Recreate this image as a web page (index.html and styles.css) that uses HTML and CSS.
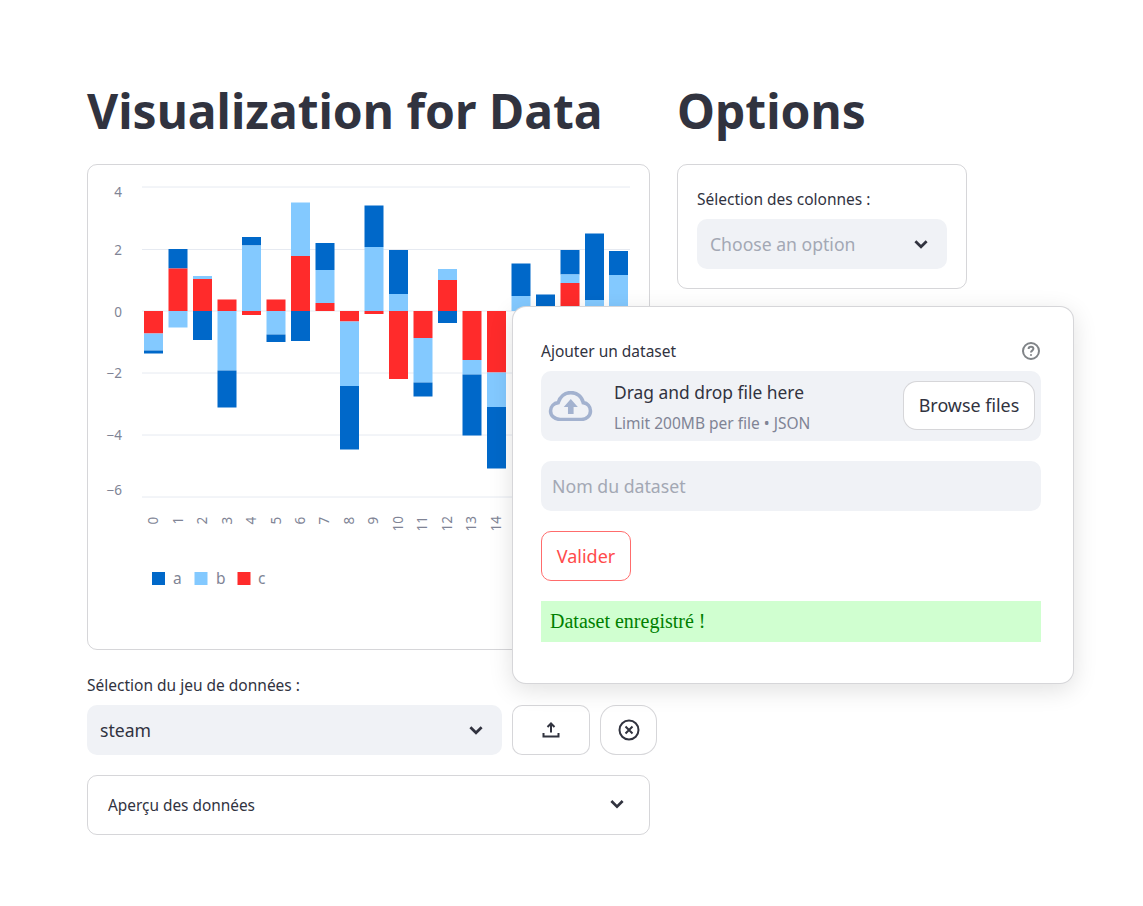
FILE: index.html
```html
<!DOCTYPE html>
<html lang="en">
<head>
    <meta charset="UTF-8">
    <title>Visualization for Data</title>
    <link rel="stylesheet" href="styles.css">
</head>
<body>
    <div class="page">
        <div class="main-col">
            <h1>Visualization for Data</h1>
            <div class="chart-card">
                <svg class="chart" width="561" height="484" viewBox="88 165 561 484">
                    <g class="grid">
                        <line x1="142" x2="630" y1="187" y2="187"/>
                        <line x1="142" x2="630" y1="249.5" y2="249.5"/>
                        <line x1="142" x2="630" y1="311" y2="311"/>
                        <line x1="142" x2="630" y1="373" y2="373"/>
                        <line x1="142" x2="630" y1="435" y2="435"/>
                        <line x1="142" x2="630" y1="497" y2="497"/>
                    </g>
                    <g class="axis-y">
                        <text x="122" y="197">4</text>
                        <text x="122" y="255">2</text>
                        <text x="122" y="316.500">0</text>
                        <text x="122" y="378">−2</text>
                        <text x="122" y="440">−4</text>
                        <text x="122" y="495">−6</text>
                    </g>
                    <g class="axis-x">
                        <text transform="translate(158 524.500) rotate(-90)">0</text>
                        <text transform="translate(183 524.500) rotate(-90)">1</text>
                        <text transform="translate(207 524.500) rotate(-90)">2</text>
                        <text transform="translate(232 524.500) rotate(-90)">3</text>
                        <text transform="translate(256 524.500) rotate(-90)">4</text>
                        <text transform="translate(281 524.500) rotate(-90)">5</text>
                        <text transform="translate(305 524.500) rotate(-90)">6</text>
                        <text transform="translate(329 524.500) rotate(-90)">7</text>
                        <text transform="translate(354 524.500) rotate(-90)">8</text>
                        <text transform="translate(378 524.500) rotate(-90)">9</text>
                        <text transform="translate(403 531.500) rotate(-90)">10</text>
                        <text transform="translate(427 531.500) rotate(-90)">11</text>
                        <text transform="translate(452 531.500) rotate(-90)">12</text>
                        <text transform="translate(476 531.500) rotate(-90)">13</text>
                        <text transform="translate(501 531.500) rotate(-90)">14</text>
                    </g>
                    <g class="bars">
                        <rect class="c" x="144" y="311" width="19" height="22.5"/>
                        <rect class="b" x="144" y="333.5" width="19" height="17"/>
                        <rect class="a" x="144" y="350.5" width="19" height="3"/>

                        <rect class="a" x="168.500" y="249" width="19" height="19.500"/>
                        <rect class="c" x="168.500" y="268.500" width="19" height="42.500"/>
                        <rect class="b" x="168.500" y="311" width="19" height="16.500"/>

                        <rect class="b" x="193" y="276" width="19" height="3"/>
                        <rect class="c" x="193" y="279" width="19" height="32"/>
                        <rect class="a" x="193" y="311" width="19" height="29"/>

                        <rect class="c" x="217.500" y="299.500" width="19" height="11.500"/>
                        <rect class="b" x="217.500" y="311" width="19" height="59.500"/>
                        <rect class="a" x="217.500" y="370.500" width="19" height="37"/>

                        <rect class="a" x="242" y="237" width="19" height="8.500"/>
                        <rect class="b" x="242" y="245.500" width="19" height="65.500"/>
                        <rect class="c" x="242" y="311" width="19" height="4"/>

                        <rect class="c" x="266.500" y="299.500" width="19" height="11.500"/>
                        <rect class="b" x="266.500" y="311" width="19" height="23.500"/>
                        <rect class="a" x="266.500" y="334.500" width="19" height="7.500"/>

                        <rect class="b" x="291" y="202.500" width="19" height="53.500"/>
                        <rect class="c" x="291" y="256" width="19" height="55"/>
                        <rect class="a" x="291" y="311" width="19" height="30"/>

                        <rect class="a" x="315.500" y="243" width="19" height="27"/>
                        <rect class="b" x="315.500" y="270" width="19" height="33"/>
                        <rect class="c" x="315.500" y="303" width="19" height="8"/>

                        <rect class="c" x="340" y="311" width="19" height="10.500"/>
                        <rect class="b" x="340" y="321.500" width="19" height="64.500"/>
                        <rect class="a" x="340" y="386" width="19" height="63.500"/>

                        <rect class="a" x="364.500" y="205.500" width="19" height="41.500"/>
                        <rect class="b" x="364.500" y="247" width="19" height="64"/>
                        <rect class="c" x="364.500" y="311" width="19" height="3"/>

                        <rect class="a" x="389" y="250" width="19" height="44"/>
                        <rect class="b" x="389" y="294" width="19" height="17"/>
                        <rect class="c" x="389" y="311" width="19" height="68"/>

                        <rect class="c" x="413.500" y="311" width="19" height="27"/>
                        <rect class="b" x="413.500" y="338" width="19" height="44.500"/>
                        <rect class="a" x="413.500" y="382.500" width="19" height="14"/>

                        <rect class="b" x="438" y="269" width="19" height="11"/>
                        <rect class="c" x="438" y="280" width="19" height="31"/>
                        <rect class="a" x="438" y="311" width="19" height="12"/>

                        <rect class="c" x="462.500" y="311" width="19" height="49"/>
                        <rect class="b" x="462.500" y="360" width="19" height="14.500"/>
                        <rect class="a" x="462.500" y="374.500" width="19" height="61"/>

                        <rect class="c" x="487" y="311" width="19" height="61.500"/>
                        <rect class="b" x="487" y="372.500" width="19" height="34.500"/>
                        <rect class="a" x="487" y="407" width="19" height="61.500"/>

                        <rect class="a" x="511.500" y="263.500" width="19" height="32.500"/>
                        <rect class="b" x="511.500" y="296" width="19" height="15"/>

                        <rect class="a" x="536" y="294.500" width="19" height="16.500"/>

                        <rect class="a" x="560.500" y="250" width="19" height="24.500"/>
                        <rect class="b" x="560.500" y="274.500" width="19" height="8.500"/>
                        <rect class="c" x="560.500" y="283" width="19" height="28"/>

                        <rect class="a" x="585" y="233.500" width="19" height="66.500"/>
                        <rect class="b" x="585" y="300" width="19" height="11"/>

                        <rect class="a" x="609" y="251" width="19" height="24"/>
                        <rect class="b" x="609" y="275" width="19" height="36"/>
                    </g>
                    <g class="legend">
                        <rect class="a" x="152" y="572" width="13" height="13"/>
                        <text x="173" y="584">a</text>
                        <rect class="b" x="194.500" y="572" width="13" height="13"/>
                        <text x="216" y="584">b</text>
                        <rect class="c" x="237.500" y="572" width="13" height="13"/>
                        <text x="258" y="584">c</text>
                    </g>
                </svg>
            </div>

            <div class="dataset-block">
                <label class="field-label">Sélection du jeu de données :</label>
                <div class="dataset-row">
                    <div class="select select-wide">
                        <span>steam</span>
                        <svg class="chevron" viewBox="0 0 16 16"><path d="M3 5.500l5 5 5-5"/></svg>
                    </div>
                    <button class="icon-btn upload-btn">
                        <svg width="18" height="18" viewBox="0 0 18 18"><path d="M9 11.500V2.500M5.500 6L9 2.500 12.500 6M1.500 12v3.500h15V12"/></svg>
                    </button>
                    <button class="icon-btn close-btn">
                        <svg width="22" height="22" viewBox="0 0 22 22"><circle cx="11" cy="11" r="9.500"/><path d="M7.500 7.500l7 7M14.500 7.500l-7 7"/></svg>
                    </button>
                </div>
            </div>

            <div class="expander">
                <span>Aperçu des données</span>
                <svg class="chevron" viewBox="0 0 16 16"><path d="M3 4.500l5 5 5-5"/></svg>
            </div>
        </div>

        <div class="side-col">
            <h1>Options</h1>
            <div class="options-card">
                <label class="field-label">Sélection des colonnes :</label>
                <div class="select placeholder">
                    <span>Choose an option</span>
                    <svg class="chevron" viewBox="0 0 16 16"><path d="M3 5.500l5 5 5-5"/></svg>
                </div>
            </div>
        </div>
    </div>

    <!-- floating dialog, sits over the chart -->
    <div class="dialog">
        <div class="dialog-head">
            <label class="field-label">Ajouter un dataset</label>
            <svg class="help" width="20" height="20" viewBox="0 0 20 20">
                <circle cx="10" cy="10" r="8"/>
                <path d="M7.600 8c0-1.500 1.100-2.300 2.400-2.300s2.400.8 2.400 2.100c0 1.800-2.400 1.800-2.400 3.600"/>
                <circle class="dot" cx="10" cy="14" r="1"/>
            </svg>
        </div>
        <div class="dropzone">
            <svg class="cloud" width="45" height="30" viewBox="0 0 46 32">
                <path class="outline" d="M12 30.300C6 30.300 1.700 26.300 1.700 21.300c0-4.700 3.500-8.300 8.200-8.900C11.700 6 17 1.700 23.300 1.700c6.700 0 12 4.500 13.300 10.700 4.500.6 7.700 4.300 7.700 8.900 0 5-4.200 9-9.700 9z"/>
                <path class="arrow" d="M23.300 8.500l7.500 8.500h-4.500v7.500h-6V17h-4.500z"/>
            </svg>
            <div class="drop-text">
                <div class="drop-title">Drag and drop file here</div>
                <div class="drop-limit">Limit 200MB per file • JSON</div>
            </div>
            <button class="browse-btn">Browse files</button>
        </div>
        <div class="text-input">Nom du dataset</div>
        <button class="submit-btn">Valider</button>
        <div class="success">Dataset enregistré !</div>
    </div>
</body>
</html>
```

FILE: styles.css
```css
* {
    box-sizing: border-box;
}

body {
    margin: 0;
    background: white;
    color: #31333f;
    font-family: 'Noto Sans', sans-serif;
}

.page {
    display: flex;
    gap: 27px;
    padding: 78px 0 0 87px;
}

.main-col {
    width: 563px;
}

.side-col {
    width: 290px;
}

h1 {
    margin: 0 0 20px;
    font-size: 48px;
    line-height: 66px;
    font-weight: 700;
    white-space: nowrap;
}

.chart-card {
    height: 486px;
    border: 1px solid rgba(49, 51, 63, 0.2);
    border-radius: 10px;
}

.chart {
    display: block;
}

.grid line {
    stroke: #e6eaf1;
    stroke-width: 1;
}

.axis-y text {
    fill: #808495;
    font-size: 13.5px;
    text-anchor: end;
}

.axis-x text {
    fill: #808495;
    font-size: 13.5px;
}

.a {
    fill: #0068c9;
}

.b {
    fill: #83c9ff;
}

.c {
    fill: #ff2b2b;
}

.legend text {
    fill: #808495;
    font-size: 15.5px;
}

.dataset-block {
    margin-top: 25px;
}

.field-label {
    display: block;
    font-size: 15.5px;
    line-height: 20px;
    margin-bottom: 10px;
    color: #31333f;
}

.dataset-row {
    display: flex;
    gap: 10px;
}

.select {
    display: flex;
    align-items: center;
    justify-content: space-between;
    height: 50px;
    padding: 0 17px 1px 13px;
    background: #f0f2f6;
    border-radius: 10px;
    font-size: 17.6px;
}

.select-wide {
    width: 415px;
    flex: none;
}

.placeholder {
    color: #a3a8b4;
}

.chevron {
    width: 18px;
    height: 18px;
    flex: none;
    fill: none;
    stroke: #31333f;
    stroke-width: 2.4;
}

.select .chevron {
    margin-bottom: -1px;
}

.icon-btn {
    height: 50px;
    flex: none;
    display: flex;
    align-items: center;
    justify-content: center;
    background: white;
    border: 1px solid rgba(49, 51, 63, 0.2);
    border-radius: 10px;
}

.icon-btn svg {
    fill: none;
    stroke: #31333f;
    stroke-width: 2;
}

.upload-btn {
    width: 78px;
}

.close-btn {
    width: 57px;
    border-radius: 16px;
}

.expander {
    display: flex;
    align-items: center;
    justify-content: space-between;
    height: 60px;
    margin-top: 20px;
    padding: 0 23px 0 20px;
    border: 1px solid rgba(49, 51, 63, 0.2);
    border-radius: 10px;
    font-size: 15.4px;
}

.options-card {
    height: 125px;
    padding: 24px 19px;
    border: 1px solid rgba(49, 51, 63, 0.2);
    border-radius: 10px;
}

.dialog {
    position: absolute;
    left: 512px;
    top: 306px;
    width: 562px;
    height: 378px;
    padding: 34px 32px 0 28px;
    background: white;
    border: 1px solid rgba(49, 51, 63, 0.2);
    border-radius: 14px;
    box-shadow: 0 6px 24px rgba(0, 0, 0, 0.12);
}

.dialog-head {
    display: flex;
    justify-content: space-between;
    align-items: center;
    height: 20px;
    margin-bottom: 10px;
}

.dialog-head .field-label {
    margin: 0;
}

.help {
    fill: none;
    stroke: #808488;
    stroke-width: 2;
}

.help .dot {
    fill: #808488;
    stroke: none;
}

.dropzone {
    display: flex;
    align-items: center;
    height: 70px;
    padding: 0 6px 0 7px;
    background: #f0f2f6;
    border-radius: 10px;
}

.cloud {
    flex: none;
}

.outline {
    fill: none;
    stroke: #a3b2cf;
    stroke-width: 3.800;
}

.arrow {
    fill: #a3b2cf;
}

.drop-text {
    margin-left: 21px;
    flex: 1;
}

.drop-title {
    font-size: 17.4px;
    line-height: 26px;
    color: #31333f;
}

.drop-limit {
    margin-top: 8px;
    font-size: 15.5px;
    line-height: 20px;
    color: #808495;
}

.browse-btn {
    width: 132px;
    height: 49px;
    margin-bottom: 2px;
    background: white;
    border: 1px solid rgba(49, 51, 63, 0.2);
    border-radius: 14px;
    font-family: inherit;
    font-size: 17.9px;
    color: #31333f;
}

.text-input {
    display: flex;
    align-items: center;
    height: 50px;
    margin-top: 20px;
    padding-left: 11px;
    background: #f0f2f6;
    border-radius: 10px;
    font-size: 17.7px;
    color: #a3a8b4;
}

.submit-btn {
    display: block;
    width: 90px;
    height: 50px;
    margin-top: 20px;
    background: white;
    border: 1px solid #ff6c6c;
    border-radius: 10px;
    font-family: inherit;
    font-size: 18px;
    color: #ff4b4b;
}

.success {
    height: 41px;
    margin-top: 20px;
    padding: 8px 9px;
    background: #d0ffd0;
    font-family: 'Liberation Serif', serif;
    font-size: 20px;
    line-height: 24px;
    color: #008000;
}
```
